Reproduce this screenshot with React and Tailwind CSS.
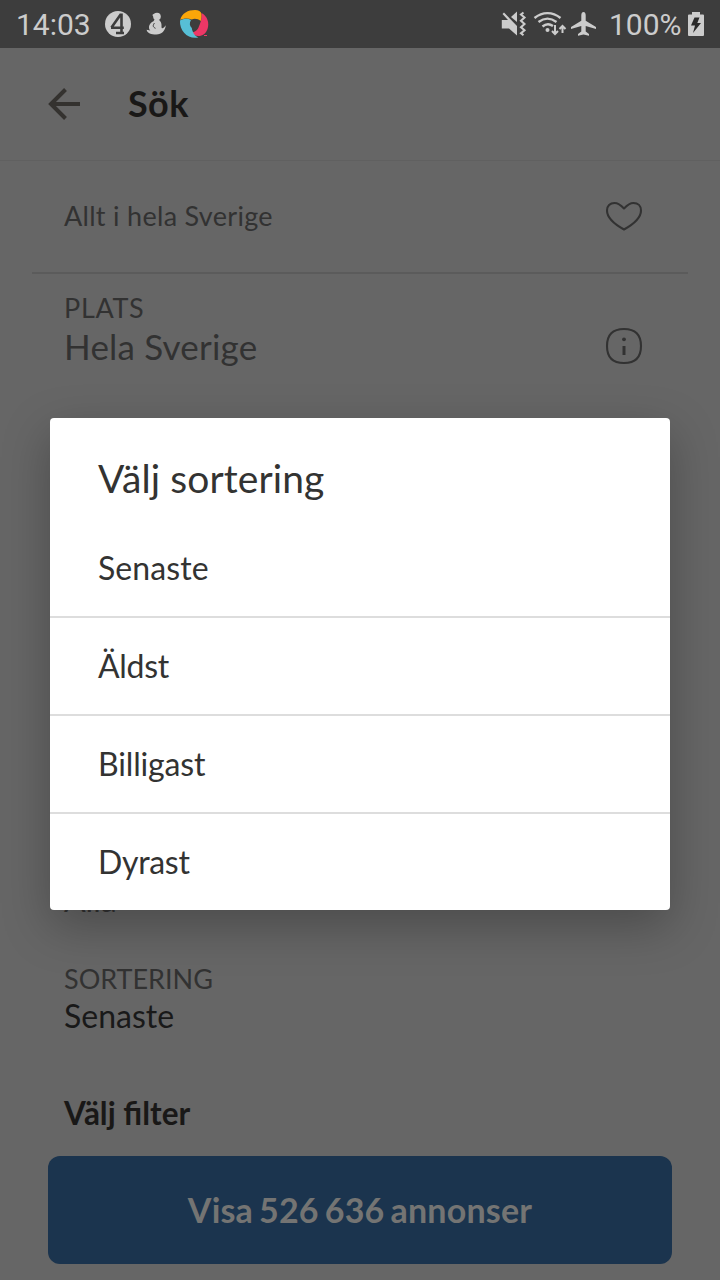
const options = [
  { label: 'Senaste', spacing: 'tracking-[0.1px]' },
  { label: 'Äldst', spacing: 'tracking-[-0.3px]' },
  { label: 'Billigast', spacing: 'tracking-[-0.15px]' },
  { label: 'Dyrast', spacing: 'tracking-[-0.3px]' },
];

function StatusBar() {
  return (
    <header className="flex h-12 items-center bg-[#3d3d3d] px-4 font-[Roboto,sans-serif] text-[#cccccc]">
      <span className="w-[89px] pt-px text-[30px] leading-[48px] whitespace-nowrap">14:03</span>
      <svg className="h-12 w-[110px] shrink-0" viewBox="105 0 110 48">
        <circle cx="118" cy="24" r="13" fill="#cccccc" />
        <path d="M121.5 13.5V33M111.5 27.5 121 14M111 27.8h12.8M116 33h8" fill="none" stroke="#3d3d3d" strokeWidth="2.6" />
        <circle cx="157" cy="16.5" r="3.8" fill="#cccccc" />
        <path d="M154 17l-1.800-2 2.200-1.400M156 18.500c4 1 6 4 5.500 8-.2 2.500 1.700 2.700 4.300-1.200-.6 5.400-4 9.200-9.500 9.200-5.200 0-9-1.200-9.700-4.700l3.700.7c-2.700-2.600-1-7.500 3.200-9.200l1.400-2.300z" fill="#cccccc" />
        <path d="M154.500 23c-1.800 2.400-1.800 4 1 5.300" fill="none" stroke="#3d3d3d" strokeWidth="1" />
        <path d="M180.200 20C182 13 188 10 195 10c3.500 0 6 1.500 6.500 4 .4 2.500 0 5-.8 7-2.500-2-6-3-9-1.500-3.500-1.500-8-1.500-11.500.5z" fill="#fba609" />
        <path d="M201.500 13c6 3 8 10 6 16-1.500 4.500-5 7-9 7-2.800 0-5.300-1-7-3.500 3-.2 6.500-2.500 7.200-5.500 1.800-4 3.600-9 2.800-14z" fill="#ed3766" />
        <path d="M180 20.500c4-2.200 8-2 11-.5-1.800 3-1.500 6 .8 8 .5 4 3 8 6.500 9.500-10 2-19-6-18.300-17z" fill="#57bfd6" />
        <path d="M204 35.500h3" stroke="#ed3766" strokeWidth="1" />
      </svg>
      <svg className="ml-auto h-12 w-[100px] shrink-0" viewBox="500 0 100 48" fill="none" stroke="#cccccc" strokeWidth="2">
        <path d="M501.800 20h6.200l-5.500-6 1.500-1.500 13 13.500v9.500L509 28.500h-7.200z" fill="#cccccc" stroke="none" />
        <path d="M511 17l6-5.500V22z" fill="#cccccc" stroke="none" />
        <path d="M523.500 12.500l-2.500 2 3.500 3-3.500 3.200 3.500 3.300-3.500 3.300 3.500 3-3.500 3 2.500 2" strokeWidth="2.100" />
        <path d="M534.500 18c8-6.500 18-6.500 26 0M538.500 22c6-4.500 12-4.500 18 0M542.500 26.500c3.500-3 7-3 10.500-.5" strokeWidth="2.400" />
        <circle cx="547.500" cy="30" r="2" fill="#cccccc" stroke="none" />
        <path d="M555 25v9m-3-3 3 3 3-3M562.500 33v-7m-3 3 3-3 3 3" />
        <path d="M583.500 12c1.500 0 2.200 1.600 2.200 3.200v5.600l10.300 6.200v2l-10.300-3v5.500l3.300 2.500v1.800l-5.500-1.300-5.500 1.300V34l3.300-2.500V26L571 29v-2l10.300-6.200v-5.600c0-1.600.7-3.200 2.200-3.200z" fill="#cccccc" stroke="none" />
      </svg>
      <span className="ml-[9px] w-[74px] pt-px text-[30px] leading-[48px] whitespace-nowrap">100%</span>
      <svg className="ml-1 h-12 w-[17px] shrink-0" viewBox="687 0 17 48">
        <path d="M692 12h8v2.500h3q1 0 1 1V35q0 1-1 1h-14q-1 0-1-1V15.500q0-1 1-1h3z" fill="#cccccc" />
        <path d="M694.500 17.500h5l-2.200 5.500h3.700l-8 10 2-7.500H691z" fill="#292929" />
      </svg>
    </header>
  );
}

function SearchPage() {
  return (
    <main className="flex h-[1232px] flex-col bg-[#666666] text-[#323232]">
      <div className="flex h-[113px] items-center border-b border-[#606060] pl-12">
        <svg className="size-8" viewBox="0 0 32 32" fill="none" stroke="#34322f" strokeWidth="4">
          <path d="M32 16H3M17.500 1.500 3 16l14.500 14.500" />
        </svg>
        <h1 className="ml-12 pb-0.5 text-[36px] leading-[44px] font-bold tracking-[0.4px] text-[#191817]">Sök</h1>
      </div>
      <div className="mx-8 flex h-[113px] items-center justify-between border-b-2 border-[#5b5b5b] pr-[45px] pb-0.5 pl-8">
        <p className="text-[27px] leading-8 tracking-[0.3px]">Allt i hela Sverige</p>
        <svg className="h-[30px] w-[38px]" viewBox="0 0 38 30" fill="none" stroke="currentColor" strokeWidth="2.100" strokeLinejoin="round">
          <path d="M19 28.500C10 23.500 2 16.500 2 9.500 2 5 5 2 9.500 2c4 0 6.800 2.600 9.500 5.500C21.700 4.600 24.500 2 28.500 2 33 2 36 5 36 9.500c0 7-8 14-17 19z" />
        </svg>
      </div>
      <div className="flex h-[120px] items-start justify-between pt-4 pr-[77px] pl-16">
        <div>
          <p className="pt-0.5 text-[27px] leading-8 tracking-[0.7px]">PLATS</p>
          <p className="text-[35px] leading-[44px] tracking-[0.2px]">Hela Sverige</p>
        </div>
        <svg className="mt-[37px] size-[38px]" viewBox="0 0 38 38" fill="none" stroke="currentColor" strokeWidth="2.100">
          <path d="M19 2c11.300 0 17 5.700 17 17s-5.700 17-17 17S2 30.300 2 19 7.700 2 19 2z" />
          <circle cx="19" cy="12.300" r="1.900" fill="currentColor" stroke="none" />
          <path d="M19 19v9" strokeWidth="3" />
        </svg>
      </div>
      <div className="mt-auto pl-16">
        <p className="text-[32px] leading-10">Alla</p>
        <p className="mt-[43px] text-[27px] leading-8">SORTERING</p>
        <p className="text-[32px] leading-[42px] text-[#191919]">Senaste</p>
        <h2 className="mt-[55px] text-[31.5px] leading-[42px] font-bold text-[#191817]">Välj filter</h2>
      </div>
      <button className="mx-12 mt-[22px] mb-4 h-[108px] shrink-0 rounded-xl bg-[#1b344e] pb-0.5 text-[34px] font-bold tracking-[0.2px] [word-spacing:-2.5px] text-[#747473]">
        Visa 526 636 annonser
      </button>
    </main>
  );
}

function SortDialog() {
  return (
    <section role="dialog" className="absolute top-[418px] left-[50px] flex h-[492px] w-[620px] flex-col overflow-hidden rounded-[4px] bg-white text-[#333332] shadow-[0_16px_48px_rgba(0,0,0,0.27)]">
      <h2 className="h-[102px] pt-[34px] pl-12 text-[39px] leading-[52px] tracking-[0.1px]">Välj sortering</h2>
      <ul className="text-[32px] leading-10">
        {options.map(({ label, spacing }) => (
          <li key={label} className={`flex h-[98px] items-center border-b-2 border-[#dddddd] pl-12 last:h-24 last:border-b-0 ${spacing}`}>
            {label}
          </li>
        ))}
      </ul>
    </section>
  );
}

export default function App() {
  return (
    <div className="relative h-[1280px] w-[720px] overflow-hidden font-[Lato,sans-serif]">
      <StatusBar />
      <SearchPage />
      <SortDialog />
    </div>
  );
}
